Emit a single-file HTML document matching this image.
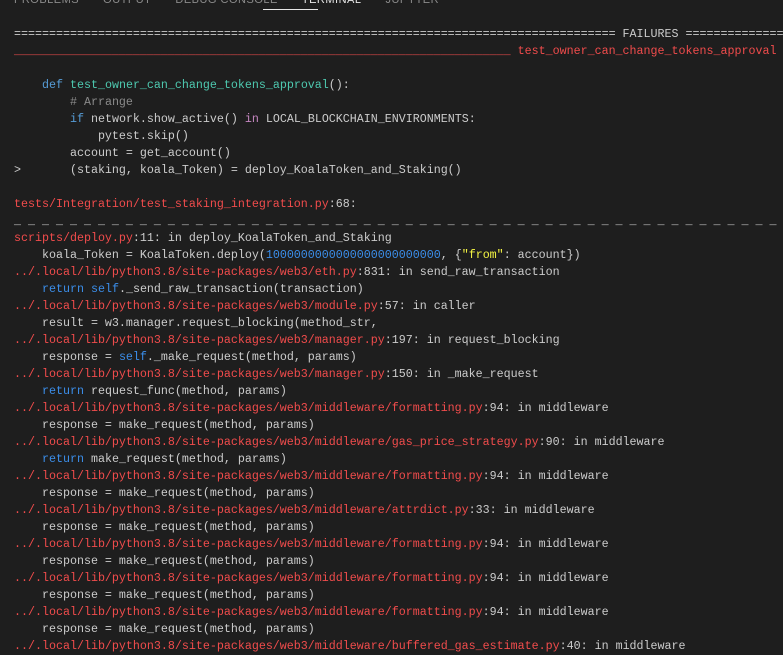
<!DOCTYPE html>
<html><head><style>
html,body{margin:0;padding:0;background:#1e1e1e;width:783px;height:645px;overflow:hidden}
.tabs{position:absolute;top:-6px;left:14px;font:11px "Liberation Sans",sans-serif;color:#8b8b8b;letter-spacing:0.5px;white-space:nowrap}
.tabs span{margin-right:24px}
.ul{position:absolute;left:263px;top:9px;width:55px;height:1px;background:#e7e7e7}
pre{position:absolute;left:14px;top:26px;margin:0;font:11.67px/17px "Liberation Mono",monospace;color:#cccccc;white-space:pre}
.r{color:#f14c4c}.b{color:#569cd6}.g{color:#4ec9b0}.c{color:#8a8a8a}.m{color:#c586c0}.n{color:#3b8eea}.y{color:#f5f543}.k{color:#3b8eea}
</style></head><body>
<div class="tabs"><span>PROBLEMS</span><span>OUTPUT</span><span>DEBUG CONSOLE</span><span style="color:#e7e7e7">TERMINAL</span><span>JUPYTER</span></div>
<div class="ul"></div>
<pre>====================================================================================== FAILURES ==============
<span class="r">_______________________________________________________________________ test_owner_can_change_tokens_approval</span>

    <span class="b">def</span> <span class="g">test_owner_can_change_tokens_approval</span>():
        <span class="c"># Arrange</span>
        <span class="b">if</span> network.show_active() <span class="m">in</span> LOCAL_BLOCKCHAIN_ENVIRONMENTS:
            pytest.skip()
        account = get_account()
&gt;       (staking, koala_Token) = deploy_KoalaToken_and_Staking()

<span class="r">tests/Integration/test_staking_integration.py</span>:68:
_ _ _ _ _ _ _ _ _ _ _ _ _ _ _ _ _ _ _ _ _ _ _ _ _ _ _ _ _ _ _ _ _ _ _ _ _ _ _ _ _ _ _ _ _ _ _ _ _ _ _ _ _ _ _
<span class="r">scripts/deploy.py</span>:11: in deploy_KoalaToken_and_Staking
    koala_Token = KoalaToken.deploy(<span class="n">1000000000000000000000000</span>, {<span class="y">"from"</span>: account})
<span class="r">../.local/lib/python3.8/site-packages/web3/eth.py</span>:831: in send_raw_transaction
    <span class="k">return</span> <span class="k">self</span>._send_raw_transaction(transaction)
<span class="r">../.local/lib/python3.8/site-packages/web3/module.py</span>:57: in caller
    result = w3.manager.request_blocking(method_str,
<span class="r">../.local/lib/python3.8/site-packages/web3/manager.py</span>:197: in request_blocking
    response = <span class="k">self</span>._make_request(method, params)
<span class="r">../.local/lib/python3.8/site-packages/web3/manager.py</span>:150: in _make_request
    <span class="k">return</span> request_func(method, params)
<span class="r">../.local/lib/python3.8/site-packages/web3/middleware/formatting.py</span>:94: in middleware
    response = make_request(method, params)
<span class="r">../.local/lib/python3.8/site-packages/web3/middleware/gas_price_strategy.py</span>:90: in middleware
    <span class="k">return</span> make_request(method, params)
<span class="r">../.local/lib/python3.8/site-packages/web3/middleware/formatting.py</span>:94: in middleware
    response = make_request(method, params)
<span class="r">../.local/lib/python3.8/site-packages/web3/middleware/attrdict.py</span>:33: in middleware
    response = make_request(method, params)
<span class="r">../.local/lib/python3.8/site-packages/web3/middleware/formatting.py</span>:94: in middleware
    response = make_request(method, params)
<span class="r">../.local/lib/python3.8/site-packages/web3/middleware/formatting.py</span>:94: in middleware
    response = make_request(method, params)
<span class="r">../.local/lib/python3.8/site-packages/web3/middleware/formatting.py</span>:94: in middleware
    response = make_request(method, params)
<span class="r">../.local/lib/python3.8/site-packages/web3/middleware/buffered_gas_estimate.py</span>:40: in middleware</pre>
</body></html>
